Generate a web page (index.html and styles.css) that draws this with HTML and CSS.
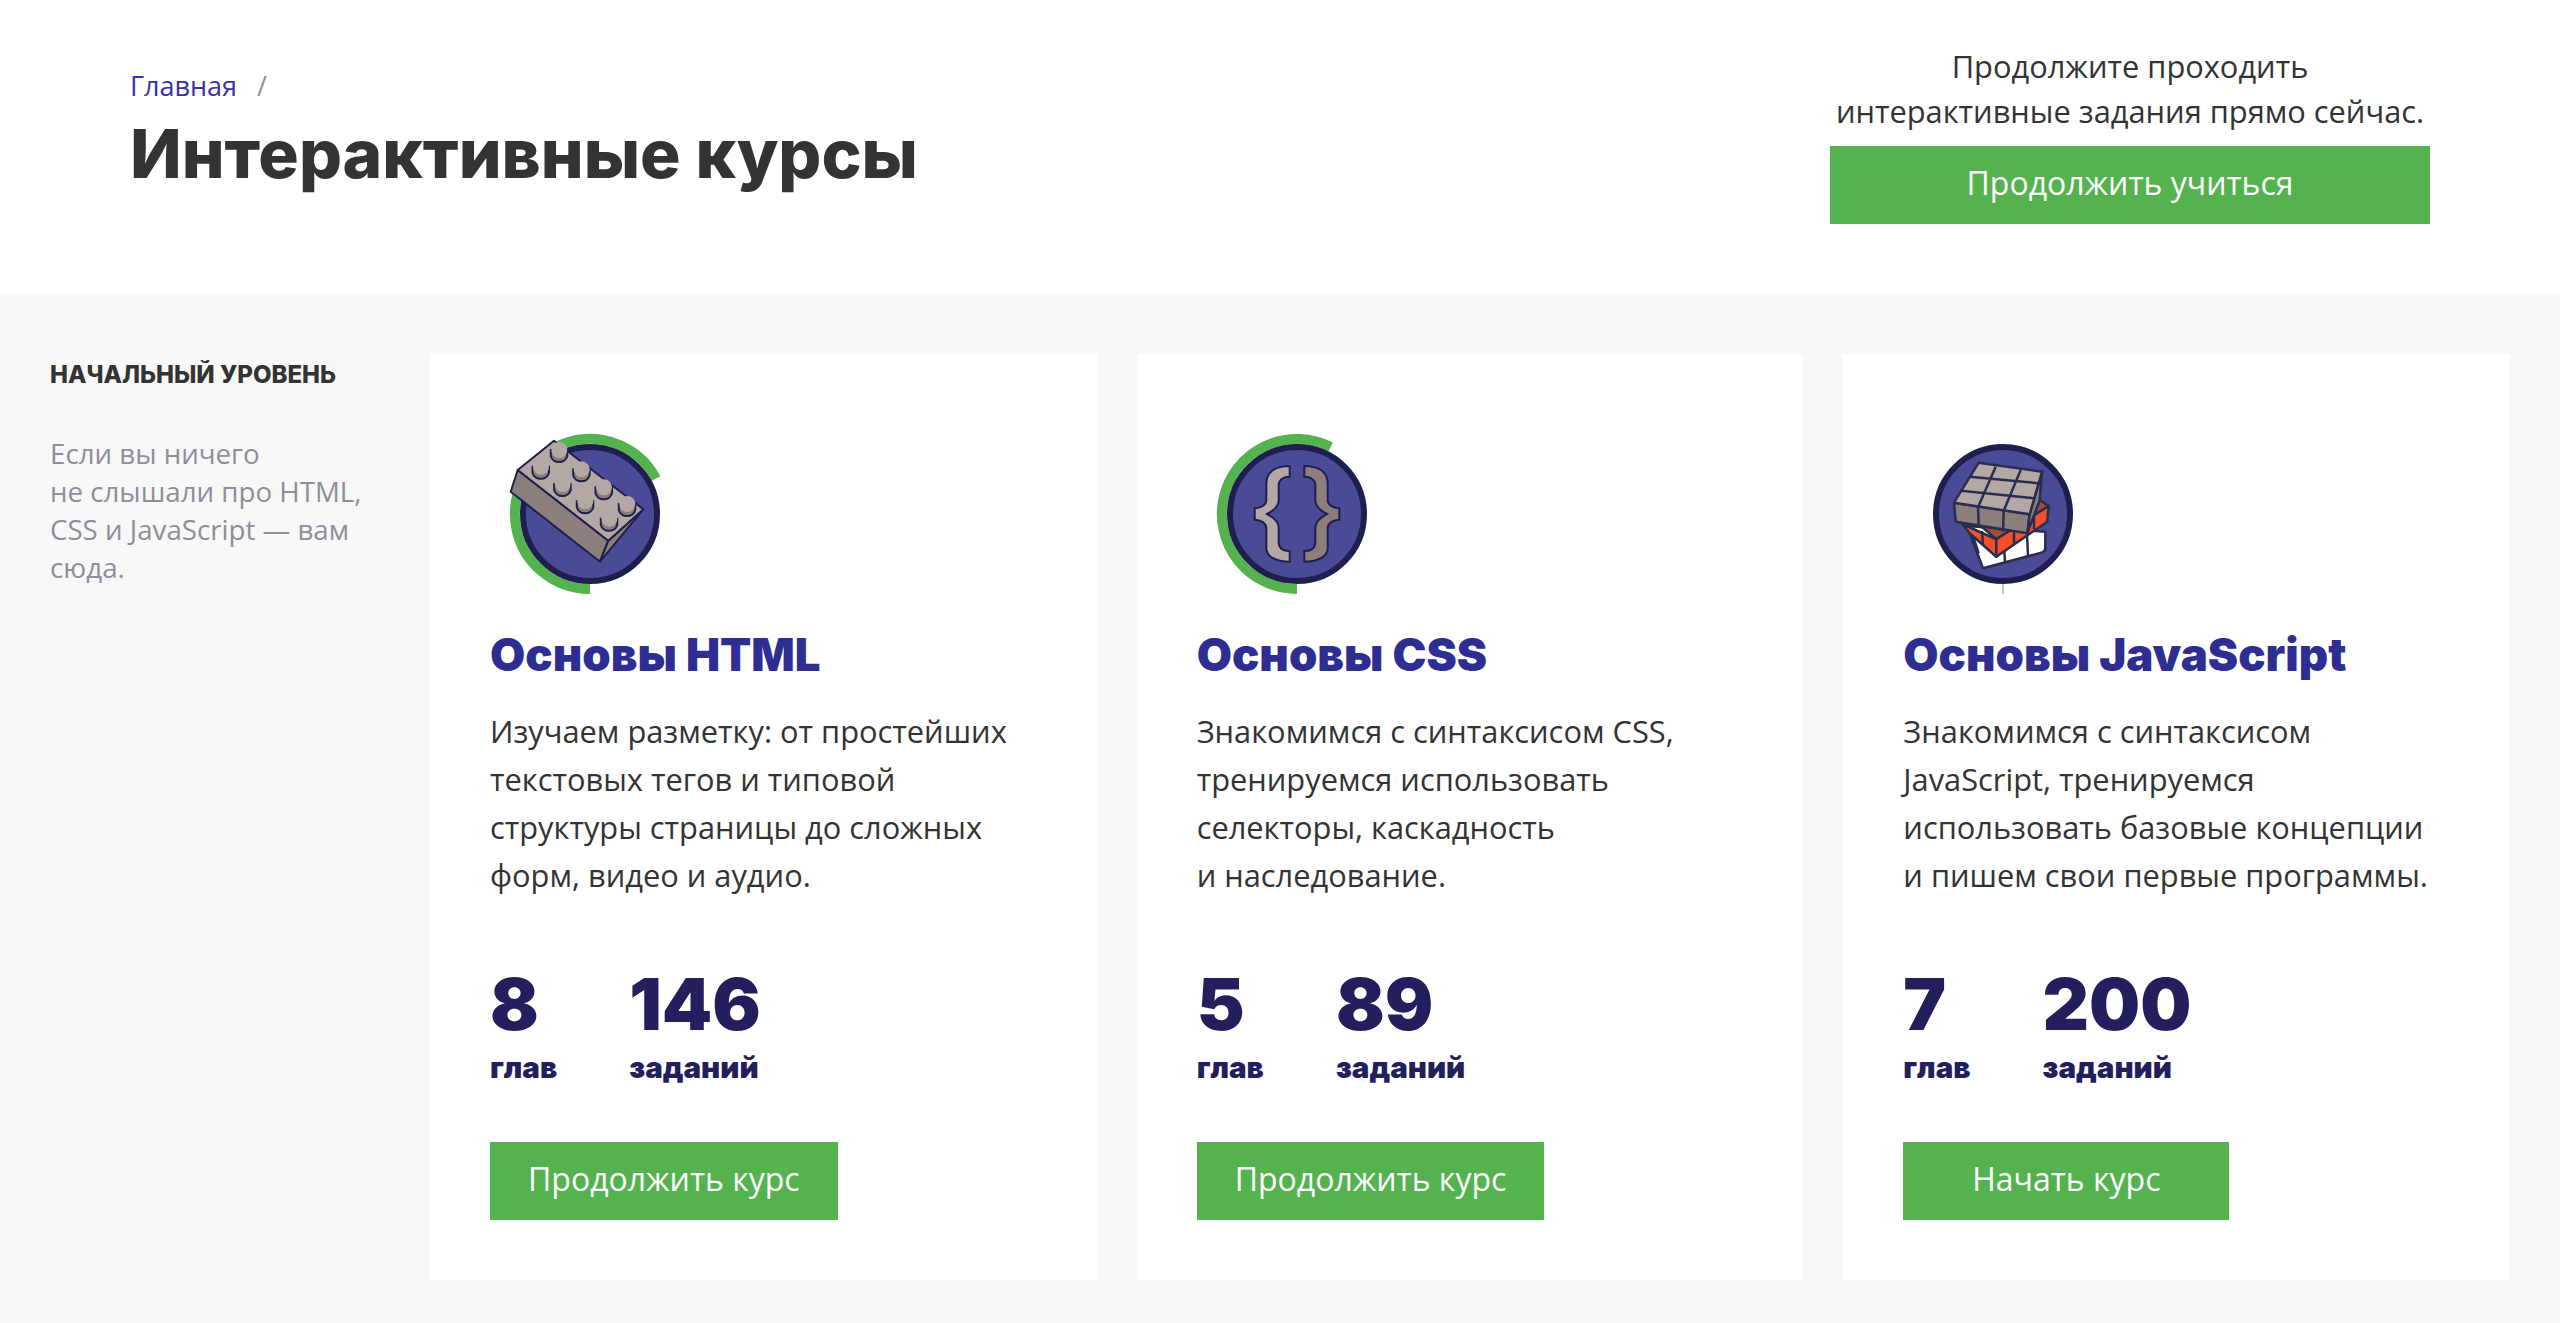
FILE: index.html
```html
<!DOCTYPE html>
<html lang="ru">
<head>
    <meta charset="UTF-8">
    <title>Интерактивные курсы</title>
    <link rel="stylesheet" href="styles.css">
</head>
<body>
    <header class="top">
        <div class="top-left">
            <nav class="crumbs"><a href="#">Главная</a><span class="crumbs-sep">/</span></nav>
            <h1>Интерактивные курсы</h1>
        </div>
        <div class="top-right">
            <p>Продолжите проходить<br>интерактивные задания прямо сейчас.</p>
            <a class="btn btn-wide" href="#">Продолжить учиться</a>
        </div>
    </header>

    <main class="level">
        <aside class="level-info">
            <h2>Начальный уровень</h2>
            <p>Если вы ничего<br>не слышали про HTML,<br>CSS и JavaScript — вам<br>сюда.</p>
        </aside>

        <div class="cards">
            <article class="card">
                <svg class="card-icon" viewBox="0 0 200 200">
                    <path class="arc" d="M166 64.5A75 75 0 1 0 100 175"/>
                    <circle class="disc" cx="100" cy="100" r="67"/>
                    <path class="line side-dark" d="M27.7 56L118.3 126.7L110 147.7L20.7 77.7Z"/>
                    <path class="line side-dark" d="M118.3 126.7L153.3 95.3L110 147.7Z"/>
                    <path class="line side-light" d="M64 26.7L153.3 95.3L118.3 126.7L27.7 56Z"/>
                    <g class="studs">
                        <g transform="translate(69.3 36)"><path d="M-8.5 0V6A8.5 8 0 0 0 8 6V0Z"/><circle r="8"/></g>
                        <g transform="translate(51 52.7)"><path d="M-8.5 0V6A8.5 8 0 0 0 8 6V0Z"/><circle r="8"/></g>
                        <g transform="translate(91.7 55.3)"><path d="M-8.5 0V6A8.5 8 0 0 0 8 6V0Z"/><circle r="8"/></g>
                        <g transform="translate(72.7 70)"><path d="M-8.5 0V6A8.5 8 0 0 0 8 6V0Z"/><circle r="8"/></g>
                        <g transform="translate(114 73.3)"><path d="M-8.5 0V6A8.5 8 0 0 0 8 6V0Z"/><circle r="8"/></g>
                        <g transform="translate(95.3 87.3)"><path d="M-8.5 0V6A8.5 8 0 0 0 8 6V0Z"/><circle r="8"/></g>
                        <g transform="translate(137.3 90)"><path d="M-8.5 0V6A8.5 8 0 0 0 8 6V0Z"/><circle r="8"/></g>
                        <g transform="translate(119.3 104.7)"><path d="M-8.5 0V6A8.5 8 0 0 0 8 6V0Z"/><circle r="8"/></g>
                    </g>
                </svg>
                <h3>Основы HTML</h3>
                <p class="card-text">Изучаем разметку: от простейших<br>текстовых тегов и типовой<br>структуры страницы до сложных<br>форм, видео и аудио.</p>
                <div class="stats">
                    <div class="stat"><b>8</b><span>глав</span></div>
                    <div class="stat"><b>146</b><span>заданий</span></div>
                </div>
                <a class="btn" href="#">Продолжить курс</a>
            </article>

            <article class="card">
                <svg class="card-icon" viewBox="0 0 200 200">
                    <path class="arc" d="M133.6 33A75 75 0 1 0 100 175"/>
                    <circle class="disc" cx="100" cy="100" r="67"/>
                    <path class="brace side-light" d="M92.7 52C78 52 69.3 58 69.3 70V86C69.3 91 64 94 57.7 94.3V105.7C64 106 69.3 109 69.3 114V134C69.3 142 78 147.7 92.7 147.7V137C86 137 81.7 134 81.7 128V114C81.7 108 76 103 70 100C76 97 81.7 92 81.7 86V71C81.7 66 86 62.7 92.7 62.7Z"/>
                    <path class="brace side-dark" transform="matrix(-1 0 0 1 200 0)" d="M92.7 52C78 52 69.3 58 69.3 70V86C69.3 91 64 94 57.7 94.3V105.7C64 106 69.3 109 69.3 114V134C69.3 142 78 147.7 92.7 147.7V137C86 137 81.7 134 81.7 128V114C81.7 108 76 103 70 100C76 97 81.7 92 81.7 86V71C81.7 66 86 62.7 92.7 62.7Z"/>
                </svg>
                <h3>Основы CSS</h3>
                <p class="card-text">Знакомимся с синтаксисом CSS,<br>тренируемся использовать<br>селекторы, каскадность<br>и наследование.</p>
                <div class="stats">
                    <div class="stat"><b>5</b><span>глав</span></div>
                    <div class="stat"><b>89</b><span>заданий</span></div>
                </div>
                <a class="btn" href="#">Продолжить курс</a>
            </article>

            <article class="card">
                <svg class="card-icon" viewBox="0 0 200 200">
                    <path class="tick" d="M100 170V180"/>
                    <circle class="disc" cx="100" cy="100" r="67"/>
                    <g class="cube">
                        <path class="white" d="M64 112L80 154.3L139 138.5Q142.3 137.5 142.3 134V117.7Z"/>
                        <path d="M75.7 139.3L70 122M102 148L101 132M125 142L124 120"/>
                        <path class="brown" d="M124 119L136.7 86L145.7 92L93.3 125.3L78 112Z"/>
                        <path class="red" d="M59.3 110L93.3 125.3V142.7L66.7 119.3Z"/>
                        <path class="red" d="M93.3 125.3L145.7 92L144.3 107.7L93.3 142.7Z"/>
                        <path d="M79 117L80 132M111 114V130M131 100V115"/>
                        <path class="side-dark" d="M51 88.7L126.7 100.3L124.3 119.3L52.7 107.7Z"/>
                        <path class="side-dark" d="M139 57.7L136.7 86L124.3 119.3L126.7 100.3Z"/>
                        <path class="side-light" d="M75.7 48.7L139 57.7L126.7 100.3L51 88.7Z"/>
                        <path d="M92.7 52.7L75 93.3L75.7 112.7M117.7 56L100.7 96.7L100 117.7M66.7 62.7L135.7 69.3M58.3 76.7L131.3 84.3"/>
                    </g>
                </svg>
                <h3>Основы JavaScript</h3>
                <p class="card-text">Знакомимся с синтаксисом<br>JavaScript, тренируемся<br>использовать базовые концепции<br>и пишем свои первые программы.</p>
                <div class="stats">
                    <div class="stat"><b>7</b><span>глав</span></div>
                    <div class="stat"><b>200</b><span>заданий</span></div>
                </div>
                <a class="btn" href="#">Начать курс</a>
            </article>
        </div>
    </main>
</body>
</html>
```

FILE: styles.css
```css
body {
    margin: 0;
    background-color: #fff;
    color: #333;
    font-family: "Open Sans", "Noto Sans", sans-serif;
}

a {
    text-decoration: none;
}

h1, h2, h3, p {
    margin: 0;
}

.top {
    display: flex;
    justify-content: space-between;
    height: 294px;
    box-sizing: border-box;
    padding: 44px 130px 0;
}

.crumbs {
    display: flex;
    height: 68px;
    padding-top: 26px;
    box-sizing: border-box;
    font-size: 27px;
    line-height: 32px;
}

.crumbs a {
    color: #3a2fb0;
}

.crumbs-sep {
    margin-left: 20px;
    color: #8e8e9c;
}

h1 {
    font-family: "Inter", sans-serif;
    font-size: 67.5px;
    line-height: 84px;
    font-weight: 800;
}

.top-right {
    width: 600px;
    text-align: center;
    font-size: 30.8px;
    line-height: 45px;
}

.top-right p {
    margin-bottom: 12px;
}

.btn {
    display: inline-block;
    box-sizing: border-box;
    min-width: 326px;
    height: 78px;
    padding: 0 38px;
    background-color: #54b34e;
    color: #fff;
    font-size: 32px;
    line-height: 74px;
    text-align: center;
}

.btn-wide {
    display: block;
    padding: 0;
}

.level {
    display: flex;
    background-color: #f8f8f8;
    padding: 60px 50px 43px;
}

.level-info {
    flex: none;
    width: 380px;
}

.level-info h2 {
    font-family: "Inter", sans-serif;
    font-size: 24px;
    line-height: 41px;
    font-weight: 800;
    text-transform: uppercase;
}

.level-info p {
    margin-top: 39px;
    color: #8e8e9c;
    font-size: 27.7px;
    line-height: 38px;
}

.cards {
    flex: 1;
    display: grid;
    grid-template-columns: repeat(3, 1fr);
    gap: 40px;
}

.card {
    height: 926px;
    box-sizing: border-box;
    padding: 60px;
    background-color: #fff;
}

.card-icon {
    display: block;
    width: 200px;
    height: 200px;
}

.arc {
    fill: none;
    stroke: #54b34e;
    stroke-width: 10;
}

.tick {
    fill: none;
    stroke: #54b34e;
    stroke-width: 1;
}

.disc {
    fill: #4a4a96;
    stroke: #1e1f4f;
    stroke-width: 6;
}

.line {
    stroke: #1e1f4f;
    stroke-width: 2;
    stroke-linejoin: round;
}

.side-dark {
    fill: #8a7f7b;
}

.side-light {
    fill: #b3a8a3;
}

.studs path {
    fill: #8a7f7b;
    stroke: #1e1f4f;
    stroke-width: 2;
}

.studs circle {
    fill: #b3a8a3;
    stroke: none;
}

.brace {
    stroke: #1e1f4f;
    stroke-width: 2;
}

.cube path {
    stroke: #2a2d4f;
    stroke-width: 2.5;
    stroke-linejoin: round;
    fill: none;
}

.cube .side-dark {
    fill: #8a7f7b;
}

.cube .side-light {
    fill: #b3a8a3;
}

.cube .white {
    fill: #fff;
}

.cube .red {
    fill: #f5502a;
}

.cube .brown {
    fill: #9c4f3a;
}

.card h3 {
    margin-top: 12px;
    font-family: "Inter", sans-serif;
    color: #2e2d92;
    font-size: 45.5px;
    line-height: 58px;
    font-weight: 900;
}

.card-text {
    margin-top: 23px;
    height: 192px;
    color: #333;
    font-size: 30.8px;
    line-height: 48px;
}

.stats {
    display: flex;
    gap: 72px;
    margin-top: 65px;
    color: #221f5c;
}

.stat b {
    display: block;
    font-family: "Inter", sans-serif;
    font-size: 72px;
    line-height: 80px;
    font-weight: 900;
}

.stat span {
    display: block;
    margin-top: 5px;
    font-family: "Inter", sans-serif;
    font-size: 29.5px;
    line-height: 36px;
    font-weight: 900;
}

.card .btn {
    margin-top: 57px;
}
```
